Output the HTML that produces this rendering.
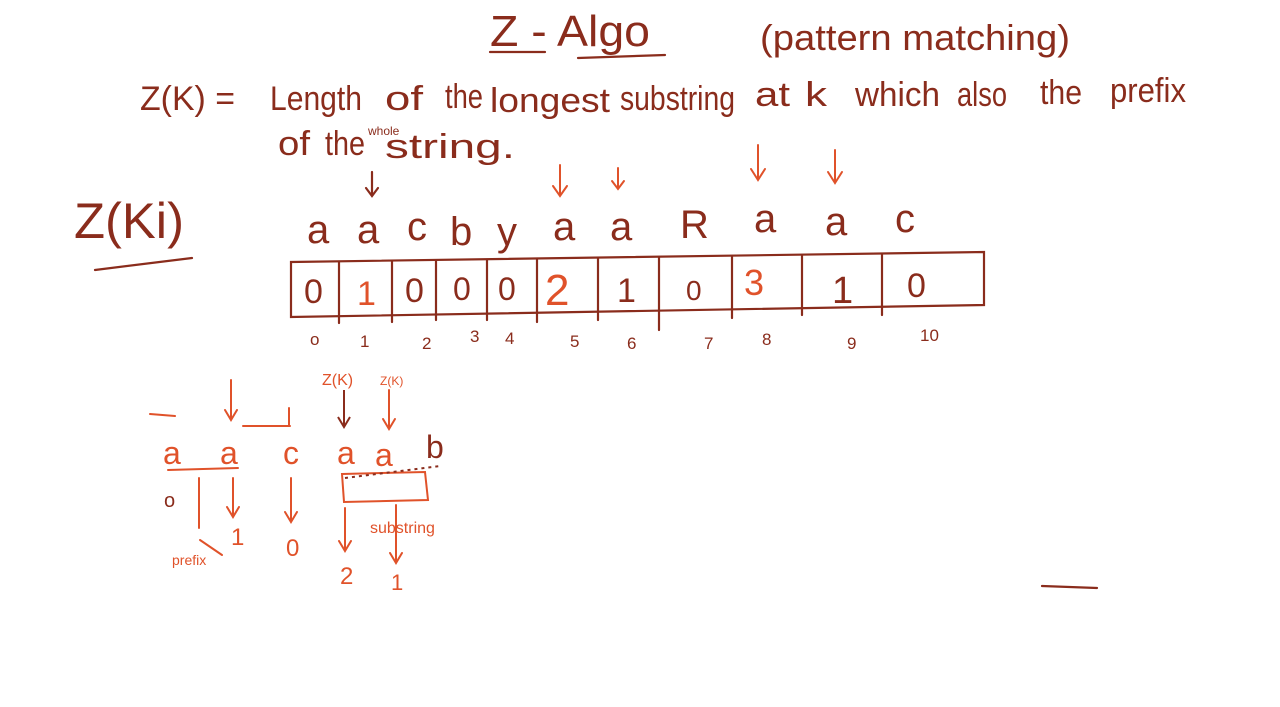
<!DOCTYPE html>
<html><head><meta charset="utf-8"><style>
html,body{margin:0;padding:0;background:#fff;width:1280px;height:707px;overflow:hidden}
svg{display:block}
.d{fill:#8a2c1c;font-family:"Liberation Sans",sans-serif}
.o{fill:#e0522a;font-family:"Liberation Sans",sans-serif}
</style></head><body>
<svg width="1280" height="707" viewBox="0 0 1280 707">
<g stroke="#8a2c1c" stroke-width="2.2" fill="none" stroke-linecap="round">
<line x1="490" y1="52" x2="545" y2="52"/>
<line x1="578" y1="58" x2="665" y2="55"/>
<line x1="95" y1="270" x2="192" y2="258"/>
<line x1="1042" y1="586" x2="1097" y2="588"/>
<path d="M291 262 L984 252 L984 305 L291 317 Z"/>
<path d="M339 262 V323 M392 261 V322 M436 261 V320 M487 260 V320 M537 259 V322 M598 258 V320 M659 257 V330 M732 256 V318 M802 255 V315 M882 254 V315"/>
<path d="M372 172 V195 M366 188 L372 196 L378 188"/>
</g>
<g class="d">
<text x="490" y="46" font-size="44" textLength="160" lengthAdjust="spacingAndGlyphs">Z - Algo</text>
<text x="760" y="50" font-size="36" textLength="310" lengthAdjust="spacingAndGlyphs">(pattern matching)</text>
<g font-size="34">
<text x="140" y="110" textLength="95" lengthAdjust="spacingAndGlyphs">Z(K) =</text>
<text x="270" y="110" textLength="92" lengthAdjust="spacingAndGlyphs">Length</text>
<text x="385" y="110" textLength="38" lengthAdjust="spacingAndGlyphs">of</text>
<text x="445" y="108" textLength="38" lengthAdjust="spacingAndGlyphs">the</text>
<text x="490" y="112" textLength="120" lengthAdjust="spacingAndGlyphs">longest</text>
<text x="620" y="110" textLength="115" lengthAdjust="spacingAndGlyphs">substring</text>
<text x="755" y="106" textLength="35" lengthAdjust="spacingAndGlyphs">at</text>
<text x="805" y="106" textLength="22" lengthAdjust="spacingAndGlyphs">k</text>
<text x="855" y="106" textLength="85" lengthAdjust="spacingAndGlyphs">which</text>
<text x="957" y="106" textLength="50" lengthAdjust="spacingAndGlyphs">also</text>
<text x="1040" y="104" textLength="42" lengthAdjust="spacingAndGlyphs">the</text>
<text x="1110" y="102" textLength="76" lengthAdjust="spacingAndGlyphs">prefix</text>
<text x="278" y="155" textLength="32" lengthAdjust="spacingAndGlyphs">of</text>
<text x="325" y="155" textLength="40" lengthAdjust="spacingAndGlyphs">the</text>
<text x="385" y="158" textLength="130" lengthAdjust="spacingAndGlyphs">string.</text>
</g>
<text x="368" y="135" font-size="12">whole</text>
<text x="74" y="238" font-size="50" textLength="110" lengthAdjust="spacingAndGlyphs">Z(Ki)</text>
<text x="307" y="243" font-size="40">a</text>
<text x="357" y="243" font-size="40">a</text>
<text x="407" y="240" font-size="40">c</text>
<text x="450" y="245" font-size="40">b</text>
<text x="497" y="245" font-size="40">y</text>
<text x="553" y="240" font-size="40">a</text>
<text x="610" y="240" font-size="40">a</text>
<text x="680" y="238" font-size="40">R</text>
<text x="754" y="232" font-size="40">a</text>
<text x="825" y="235" font-size="40">a</text>
<text x="895" y="232" font-size="40">c</text>
<text x="304" y="303" font-size="34">0</text>
<text x="405" y="302" font-size="34">0</text>
<text x="453" y="300" font-size="32">0</text>
<text x="498" y="300" font-size="32">0</text>
<text x="617" y="302" font-size="34">1</text>
<text x="686" y="300" font-size="28">0</text>
<text x="832" y="303" font-size="38">1</text>
<text x="907" y="297" font-size="34">0</text>
<g font-size="17">
<text x="310" y="345">o</text><text x="360" y="347">1</text><text x="422" y="349">2</text>
<text x="470" y="342">3</text><text x="505" y="344">4</text><text x="570" y="347">5</text>
<text x="627" y="349">6</text><text x="704" y="349">7</text><text x="762" y="345">8</text>
<text x="847" y="349">9</text><text x="920" y="341">10</text></g>
</g>
<g class="o">
<text x="357" y="305" font-size="34">1</text>
<text x="545" y="305" font-size="44">2</text>
<text x="744" y="295" font-size="36">3</text>
<text x="322" y="385" font-size="16">Z(K)</text>
<text x="380" y="385" font-size="12">Z(K)</text>
<text x="163" y="464" font-size="32">a</text>
<text x="220" y="464" font-size="32">a</text>
<text x="283" y="464" font-size="32">c</text>
<text x="337" y="464" font-size="32">a</text>
<text x="375" y="466" font-size="32">a</text>
<text x="426" y="458" font-size="32" fill="#8a2c1c">b</text>
<text x="164" y="507" font-size="20" fill="#8a2c1c">o</text>
<text x="231" y="545" font-size="24">1</text>
<text x="286" y="556" font-size="24">0</text>
<text x="340" y="584" font-size="24">2</text>
<text x="391" y="590" font-size="22">1</text>
<text x="172" y="565" font-size="14">prefix</text>
<text x="370" y="533" font-size="16">substring</text>
</g>
<g stroke="#e0522a" stroke-width="2" fill="none" stroke-linecap="round">
<path d="M560 165 V195 M553 186 L560 196 L567 186"/>
<path d="M618 168 V188 M612 181 L618 189 L624 181"/>
<path d="M758 145 V178 M751 169 L758 180 L765 169"/>
<path d="M835 150 V182 M828 172 L835 183 L842 172"/>
<path d="M231 380 V418 M225 410 L231 420 L237 410"/>
<path d="M389 390 V427 M383 419 L389 429 L395 419"/>
<path d="M150 414 L175 416 M243 426 L290 426 M289 408 V425"/>
<path d="M168 470 L238 468 M342 474 L425 472 L428 500 L344 502 Z"/>
<path d="M199 478 V528 M233 478 V515 M227 507 L233 517 L239 507"/>
<path d="M291 478 V520 M285 512 L291 522 L297 512"/>
<path d="M345 508 V550 M339 541 L345 551 L351 541"/>
<path d="M396 505 V562 M390 553 L396 563 L402 553"/>
<path d="M200 540 L222 555"/>
</g>
<g stroke="#8a2c1c" stroke-width="2" fill="none">
<path d="M344 390 V425 M338 417 L344 427 L350 417"/>
<path d="M345 478 L440 466" stroke-dasharray="3 4"/>
</g>
</svg>
</body></html>
